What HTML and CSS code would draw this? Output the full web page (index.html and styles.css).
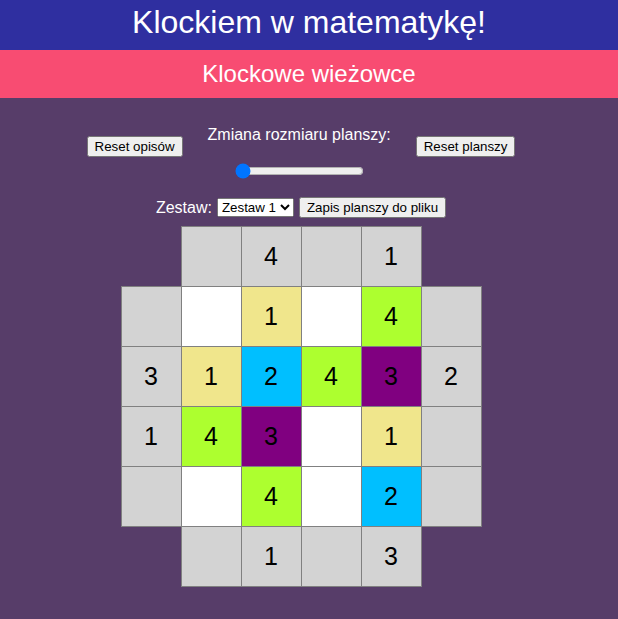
FILE: index.html
```html
<!DOCTYPE html>
<html lang="pl">
<head>
<meta charset="utf-8">
<title>Klockowe wieżowce</title>
<link rel="stylesheet" href="styles.css">
</head>
<body>
<h1 class="title">Klockiem w matematykę!</h1>
<h2 class="subtitle">Klockowe wieżowce</h2>
<main class="content">
  <div class="controls">
    <button class="btn btn-left" type="button">Reset opisów</button>
    <div class="size-box">
      <div class="size-label">Zmiana rozmiaru planszy:</div>
      <input class="size-range" type="range" min="4" max="9" value="4">
    </div>
    <button class="btn btn-right" type="button">Reset planszy</button>
  </div>
  <div class="set-row">
    <label class="set-label" for="set">Zestaw:</label>
    <select id="set" class="set-select"><option>Zestaw 1</option><option>Zestaw 2</option></select>
    <button class="btn" type="button">Zapis planszy do pliku</button>
  </div>
  <table class="board">
    <tr><td class="corner"></td><td class="clue"></td><td class="clue">4</td><td class="clue"></td><td class="clue">1</td><td class="corner"></td></tr>
    <tr><td class="clue"></td><td class="c0"></td><td class="c1">1</td><td class="c0"></td><td class="c4">4</td><td class="clue"></td></tr>
    <tr><td class="clue">3</td><td class="c1">1</td><td class="c2">2</td><td class="c4">4</td><td class="c3">3</td><td class="clue">2</td></tr>
    <tr><td class="clue">1</td><td class="c4">4</td><td class="c3">3</td><td class="c0"></td><td class="c1">1</td><td class="clue"></td></tr>
    <tr><td class="clue"></td><td class="c0"></td><td class="c4">4</td><td class="c0"></td><td class="c2">2</td><td class="clue"></td></tr>
    <tr><td class="corner"></td><td class="clue"></td><td class="clue">1</td><td class="clue"></td><td class="clue">3</td><td class="corner"></td></tr>
  </table>
</main>
</body>
</html>
```
FILE: styles.css
```css
html, body {
  margin: 0;
  padding: 0;
}
body {
  background: #573d69;
  font-family: "Liberation Sans", Arial, sans-serif;
  color: #fff;
}
.title {
  margin: 0;
  height: 50px;
  line-height: 44px;
  font-size: 32px;
  font-weight: normal;
  text-align: center;
  background: #2f2fa0;
  color: #fff;
}
.subtitle {
  margin: 0;
  height: 48px;
  line-height: 48px;
  font-size: 24px;
  font-weight: normal;
  text-align: center;
  background: #f84c72;
  color: #fff;
}
.content {
  display: flex;
  flex-direction: column;
  align-items: center;
  padding-right: 16px;
}
.controls {
  display: flex;
  align-items: flex-start;
  gap: 25px;
  margin-top: 27px;
}
.btn {
  font-family: Arial, "Liberation Sans", sans-serif;
  font-size: 13.33px;
  margin: 0;
}
.btn-left, .btn-right {
  margin-top: 11px;
}
.size-box {
  display: flex;
  flex-direction: column;
  align-items: center;
}
.size-label {
  font-size: 16px;
  line-height: 19px;
}
.size-range {
  margin: 19px 0 0;
  width: 129px;
}
.set-row {
  display: flex;
  align-items: center;
  gap: 5px;
  margin-top: 18px;
  font-size: 16px;
}
.set-select {
  font-family: Arial, "Liberation Sans", sans-serif;
  font-size: 13.33px;
  margin: 0;
}
.board {
  border-collapse: collapse;
  margin-top: 8px;
}
.board td {
  width: 59px;
  height: 59px;
  padding: 0;
  border: 1px solid #808080;
  text-align: center;
  vertical-align: middle;
  font-size: 25px;
  color: #000;
}
.board td.corner {
  border: none;
  background: transparent;
}
.clue { background: #d3d3d3; }
.c0 { background: #fff; }
.c1 { background: #f0e68c; }
.c2 { background: #00bfff; }
.c3 { background: #800080; }
.c4 { background: #adff2f; }
```
